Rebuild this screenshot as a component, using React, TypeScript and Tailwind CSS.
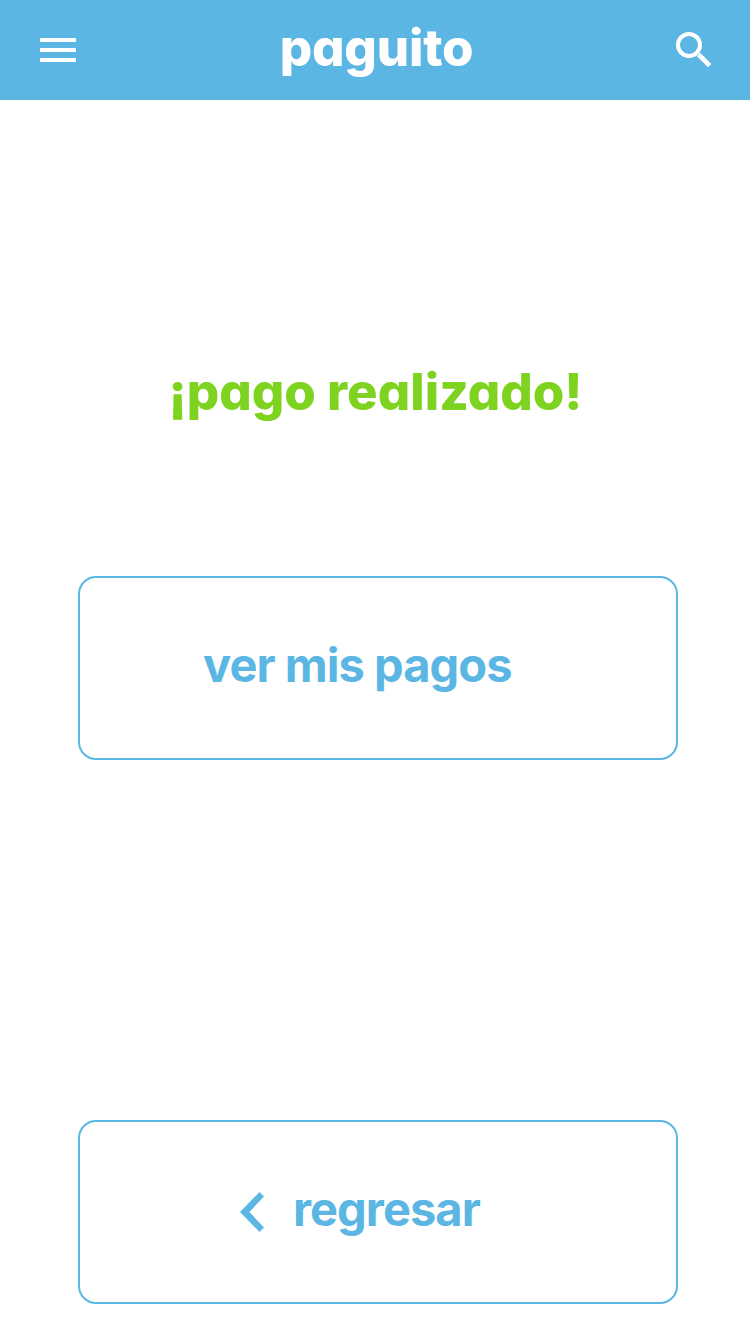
export default function App() {
  return (
    <div className="flex h-[1334px] w-[750px] flex-col overflow-hidden bg-white font-['Inter',sans-serif] text-[#5cb6e3]">
      <header className="flex h-[100px] items-center justify-between bg-[#5cb6e3] pr-[38px] pl-10 text-white">
        <button aria-label="Menú" className="w-9">
          <svg viewBox="0 0 36 24" className="h-6 w-9" fill="currentColor"><path d="M0 0h36v4H0zM0 10h36v4H0zM0 20h36v4H0z" /></svg>
        </button>
        <h1 className="pl-[1px] pb-[6px] text-[51px] leading-none font-extrabold tracking-[-0.2px] [font-feature-settings:'cv11']">paguito</h1>
        <button aria-label="Buscar" className="w-9">
          <svg viewBox="0 0 36 36" className="h-9 w-9" fill="none" stroke="currentColor"><circle cx="13" cy="13" r="11" strokeWidth="4" /><path d="m22.5 22.5 11.2 11.2" strokeWidth="4.6" /></svg>
        </button>
      </header>
      <main className="flex flex-col items-center">
        <h2 className="mt-[260px] ml-[1px] text-[51px] leading-[64px] font-extrabold whitespace-nowrap text-[#7ed321] [font-feature-settings:'cv11']">¡pago realizado!</h2>
        <button className="mt-[152px] ml-[6px] flex h-[184px] w-[600px] items-center rounded-[18px] border-2 border-current pl-[123px] text-[47px] font-bold tracking-[-0.95px]"><span className="pb-[6px]">ver mis pagos</span></button>
        <button className="mt-[360px] ml-[6px] flex h-[184px] w-[600px] items-center rounded-[18px] border-2 border-current pl-[160px] text-[47px] font-bold tracking-[-0.95px]">
          <svg viewBox="0 0 25 40" className="mr-[28px] h-10 w-[25px]" fill="currentColor"><path d="M19.5 0 0 20l19.5 20 4.5-4.5L9.4 20 24 4.5z" /></svg>
          <span className="pb-[6px]">regresar</span>
        </button>
      </main>
    </div>
  );
}
